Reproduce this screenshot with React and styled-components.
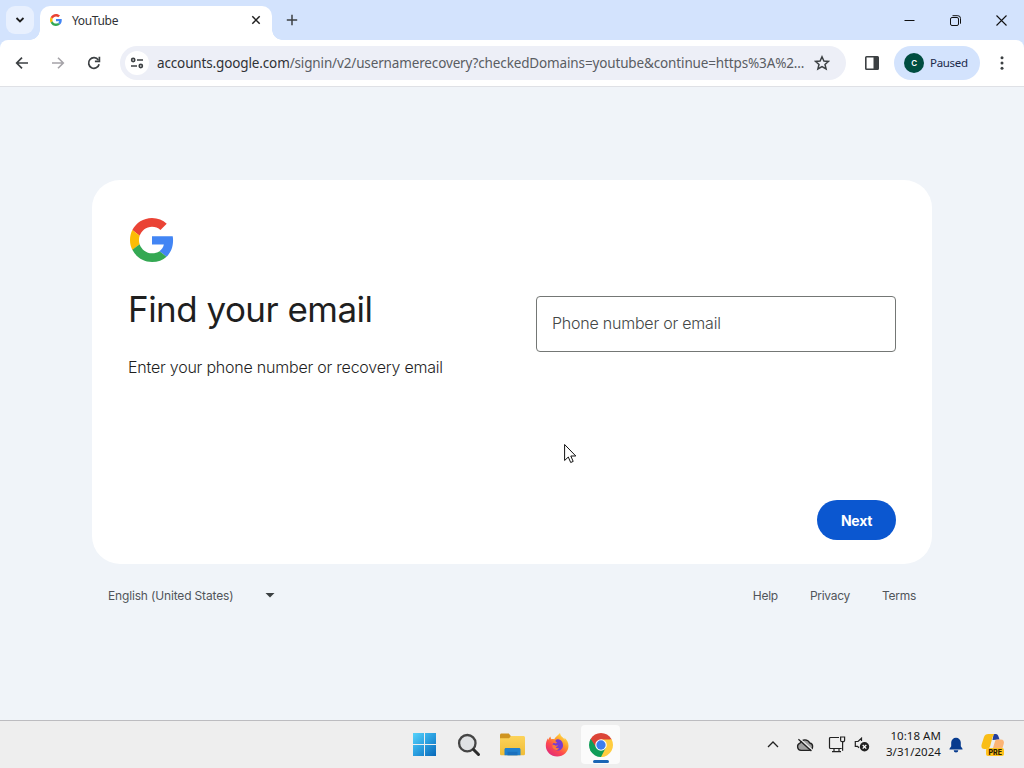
import React from "react";
import styled, { createGlobalStyle } from "styled-components";

const GlobalStyle = createGlobalStyle`
* {
  box-sizing: border-box;
}
body {
  margin: 0;
  overflow: hidden;
}
svg {
  flex-shrink: 0;
}
`

const ui = `"Noto Sans", "Open Sans", sans-serif`
const google = `Inter, Roboto, sans-serif`

const Desktop = styled.div`
position: relative;
display: flex;
flex-direction: column;
width: 1024px;
height: 768px;
overflow: hidden;
background: #d3e3fd;
font-family: ${ui};
`

/* tab strip */
const TabStrip = styled.div`
display: flex;
align-items: center;
height: 40px;
padding-left: 6px;
`
const TabSearch = styled.button`
display: flex;
align-items: center;
justify-content: center;
width: 28px;
height: 28px;
padding: 0;
border: none;
border-radius: 9px;
background: #e8f0fe;
`
const Tab = styled.div`
position: relative;
display: flex;
align-items: center;
align-self: flex-end;
width: 232px;
height: 34px;
margin-left: 6px;
padding: 0 10px 6px;
border-radius: 10px 10px 0 0;
background: #fff;

&::before,
&::after {
  content: "";
  position: absolute;
  bottom: 0;
  width: 10px;
  height: 10px;
}
&::before {
  left: -10px;
  background: radial-gradient(circle at 0 0, transparent 9.5px, #fff 10px);
}
&::after {
  right: -10px;
  background: radial-gradient(circle at 100% 0, transparent 9.5px, #fff 10px);
}
`
const TabTitle = styled.span`
flex: 1;
padding-top: 2px;
margin-left: 10px;
font-size: 12px;
line-height: 16px;
letter-spacing: -0.35px;
color: #303236;
`
const NewTab = styled.div`
display: flex;
margin-left: 14px;
`
const WindowButtons = styled.div`
display: flex;
margin-left: auto;

> div {
  display: flex;
  align-items: center;
  justify-content: center;
  width: 46px;
  height: 40px;
}
`

/* toolbar */
const Toolbar = styled.div`
display: flex;
align-items: center;
height: 47px;
padding: 0 14px 1px;
border-bottom: 1px solid #dfe1e6;
border-radius: 8px 8px 0 0;
background: #fff;
`
const NavButtons = styled.div`
display: flex;
gap: 20px;
margin-right: 18px;
`
const Omnibox = styled.div`
display: flex;
align-items: center;
width: 726px;
height: 34px;
padding: 0 16px 0 5px;
border-radius: 17px;
background: #edeff7;
`
const SiteChip = styled.div`
display: flex;
align-items: center;
justify-content: center;
flex-shrink: 0;
width: 24px;
height: 24px;
border-radius: 50%;
background: #fff;
`
const Url = styled.span`
flex: 1;
min-width: 0;
margin-left: 8px;
font-size: 13.5px;
line-height: 20px;
letter-spacing: -0.14px;
white-space: nowrap;
color: #5a5d63;

> b {
  font-weight: 400;
  color: #303236;
}
`
const PanelButton = styled.div`
display: flex;
margin: 0 14px 0 18px;
`
const Profile = styled.div`
display: flex;
align-items: center;
gap: 6px;
width: 86px;
height: 34px;
padding-left: 10px;
border-radius: 17px;
background: #d3e3fd;
font-size: 11.5px;
letter-spacing: -0.3px;
color: #1b2a4a;
`
const Avatar = styled.div`
display: flex;
align-items: center;
justify-content: center;
width: 20px;
height: 20px;
border-radius: 50%;
background: #004d40;
color: #fff;
font-family: ${google};
font-size: 8px;
font-weight: 600;
line-height: 20px;
`
const Menu = styled.div`
display: flex;
margin-left: 14px;
`

/* page */
const Page = styled.main`
flex: 1;
display: flex;
flex-direction: column;
align-items: center;
padding-top: 93px;
background: #f0f4f9;
font-family: ${google};
`
const Card = styled.section`
display: flex;
flex-direction: column;
width: 840px;
height: 384px;
padding: 38px 36px 24px;
border-radius: 28px;
background: #fff;
`
const LogoBox = styled.div`
display: flex;
height: 44px;
padding-left: 2px;
`
const Columns = styled.div`
display: flex;
justify-content: space-between;
margin-top: 24px;
`
const Title = styled.h1`
margin: 1px 0 0;
font-size: 35px;
font-weight: 400;
line-height: 44px;
letter-spacing: -0.53px;
white-space: nowrap;
color: #1f1f1f;
`
const Hint = styled.p`
margin: 24px 0 0;
font-size: 16px;
font-weight: 300;
line-height: 24px;
letter-spacing: -0.22px;
white-space: nowrap;
color: #1f1f1f;
`
const Field = styled.div`
display: flex;
align-items: center;
width: 360px;
height: 56px;
margin-top: 10px;
padding: 0 15px 2px;
border: 1px solid #747775;
border-radius: 4px;
font-size: 16px;
font-weight: 300;
letter-spacing: -0.22px;
color: #444746;
`
const NextButton = styled.button`
align-self: flex-end;
width: 79px;
height: 40px;
margin-top: auto;
padding: 0;
border: none;
border-radius: 20px;
background: #0b57d0;
color: #fff;
font-family: ${google};
font-size: 14px;
font-weight: 700;
letter-spacing: -0.3px;
`
const Footer = styled.footer`
display: flex;
align-items: center;
justify-content: space-between;
width: 808px;
height: 62px;
font-size: 12px;
letter-spacing: -0.16px;
color: #50545a;
`
const Language = styled.div`
display: flex;
align-items: center;
justify-content: space-between;
width: 167px;
`
const Links = styled.div`
display: flex;
gap: 32px;
letter-spacing: -0.28px;
`

/* taskbar */
const Taskbar = styled.div`
display: flex;
align-items: center;
height: 48px;
padding-left: 405px;
border-top: 1px solid #bcbcc0;
background: #eeeeee;
`
const TaskButton = styled.div`
position: relative;
display: flex;
align-items: center;
justify-content: center;
width: 39px;
height: 39px;
margin-right: 5px;
border-radius: 4px;
background: ${(props) => (props.$active ? "#fbfbfb" : "transparent")};

&::after {
  content: "";
  display: ${(props) => (props.$active ? "block" : "none")};
  position: absolute;
  bottom: 1px;
  width: 16px;
  height: 3px;
  border-radius: 2px;
  background: #1a66b5;
}
`
const Tray = styled.div`
display: flex;
align-items: center;
margin-left: auto;
padding-right: 19px;
`
const TrayItem = styled.div`
display: flex;
margin-right: ${(props) => props.$gap}px;
`
const Clock = styled.div`
width: 58px;
padding-bottom: 2px;
margin-right: 8px;
font-size: 11.5px;
line-height: 16px;
letter-spacing: 0.05px;
text-align: right;
white-space: nowrap;
color: #1a1a1a;
`

/* the pointer floats over the page */
const Pointer = styled.svg`
position: absolute;
left: 564px;
top: 443px;
`

const GoogleLogo = ({ size }) => (
  <svg width={size} height={size} viewBox="0 0 48 48">
    <path fill="#ea4335" d="M24 9.5c3.54 0 6.71 1.22 9.21 3.6l6.85-6.85C35.9 2.38 30.47 0 24 0 14.62 0 6.51 5.38 2.56 13.22l7.98 6.19C12.43 13.72 17.74 9.5 24 9.5z" />
    <path fill="#4285f4" d="M46.98 24.55c0-1.57-.15-3.09-.38-4.55H24v9.02h12.94c-.58 2.96-2.26 5.48-4.78 7.18l7.73 6c4.51-4.18 7.09-10.36 7.09-17.65z" />
    <path fill="#fbbc05" d="M10.53 28.59c-.48-1.45-.76-2.99-.76-4.59s.27-3.14.76-4.59l-7.98-6.19C.92 16.46 0 20.12 0 24c0 3.88.92 7.54 2.56 10.78l7.97-6.19z" />
    <path fill="#34a853" d="M24 48c6.48 0 11.93-2.13 15.89-5.81l-7.73-6c-2.15 1.45-4.92 2.3-8.16 2.3-6.26 0-11.57-4.22-13.47-9.91l-7.98 6.19C6.51 42.62 14.62 48 24 48z" />
  </svg>
)

// stroked icon with its own size and line width
const Line = ({ w = 16, h = w, color = "#3c4043", width = 1.6, d, children }) => (
  <svg width={w} height={h} viewBox={`0 0 ${w} ${h}`} fill="none" stroke={color} strokeWidth={width}>
    {d && <path d={d} />}
    {children}
  </svg>
)

const WindowsIcon = () => (
  <svg width="23" height="23" viewBox="0 0 23 23">
    <defs>
      <linearGradient id="win" x1="0" y1="0" x2="23" y2="23" gradientUnits="userSpaceOnUse">
        <stop offset="0" stopColor="#57d3fb" />
        <stop offset=".5" stopColor="#2a9fe0" />
        <stop offset="1" stopColor="#0867b8" />
      </linearGradient>
    </defs>
    <path fill="url(#win)" d="M0 0h11v11H0zM12 0h11v11H12zM0 12h11v11H0zM12 12h11v11H12z" />
  </svg>
)

const SearchIcon = () => (
  <svg width="24" height="24" viewBox="0 0 24 24">
    <circle cx="10.3" cy="10.2" r="8.2" fill="#e0e2e4" stroke="#454545" strokeWidth="2.3" />
    <path d="M16.5 16.5l5 5" stroke="#2c2c2c" strokeWidth="3" strokeLinecap="round" />
  </svg>
)

const FolderIcon = () => (
  <svg width="25" height="23" viewBox="0 0 25 23">
    <defs>
      <linearGradient id="folder" x1="0" y1="3" x2="0" y2="22" gradientUnits="userSpaceOnUse">
        <stop offset="0" stopColor="#fcd35a" />
        <stop offset="1" stopColor="#f0bd38" />
      </linearGradient>
    </defs>
    <path fill="#cf9420" d="M1.5.5h7.3l2 2.600V8H0V2C0 1.200.6.5 1.500.5z" />
    <path fill="url(#folder)" d="M0 5.300h9l2.200-2.200h12.200c.9 0 1.600.7 1.600 1.600v16c0 .9-.7 1.600-1.600 1.600H1.600c-.9 0-1.600-.7-1.600-1.600z" />
    <path fill="#2180cd" d="M6 15h13c.9 0 1.500.6 1.500 1.500v5.800h-16v-5.800c0-.9.6-1.500 1.500-1.500z" />
    <path fill="#1a70bd" d="M7.500 18.800h10v3.500h-10z" />
  </svg>
)

const FirefoxIcon = () => (
  <svg width="24" height="24" viewBox="0 0 24 24">
    <defs>
      <linearGradient id="ff" x1="20" y1="2" x2="5" y2="22" gradientUnits="userSpaceOnUse">
        <stop offset="0" stopColor="#ffe44a" />
        <stop offset=".35" stopColor="#ff9a2a" />
        <stop offset=".65" stopColor="#ff4a4e" />
        <stop offset="1" stopColor="#e02a79" />
      </linearGradient>
    </defs>
    <path fill="url(#ff)" d="M15 0c.3 2 1 3 2.800 4.500 1 .8 1.600 1.500 2 2.300-.1-1-.3-1.700-.7-2.400C22 6.300 23.500 9.500 23.500 12.800 23.500 19 18.400 23.500 12.200 23.500S.8 19 .8 12.800c0-3 .9-5.600 2.200-7.500 0 .7.1 1.300.3 1.800.4-1.700 1.100-2.700 2.200-3.600 0 1.200.3 2 .9 2.700.9-.3 2-.2 2.800.1C10.500 3.500 13.300 2.300 15 0z" />
    <path fill="#7a3bd0" d="M12.300 6.300c3.700 0 5.700 2.700 5.700 5.900s-2.300 5.300-5.300 5.300c-3.100 0-5.200-2-5.200-4.700 0-1.300.4-2.100 1-2.800.9-.1 1.600.1 2.200.6.8-.2 1.300-.5 1.700-1-.9-.2-1.700-.8-2-1.700.4-.9 1-1.500 1.900-1.600z" />
    <path fill="#ff7a35" d="M7.300 11.800c1.300-.4 2.300 0 3 .8.900.1 1.700-.1 2.600-.6-.2 1.300-1 1.900-2.200 2.100.6 1.200 2.100 1.500 3.600.8-.9 1.900-3.300 2.600-5.100 1.600-1.600-.9-2.400-2.900-1.900-4.700z" />
  </svg>
)

const ChromeIcon = () => (
  <svg width="24" height="24" viewBox="0 0 48 48">
    <path fill="#db4437" d="M24 24L3.220 12A24 24 0 0 1 44.780 12z" />
    <path fill="#ffcd40" d="M24 24L44.780 12A24 24 0 0 1 24 48z" />
    <path fill="#0f9d58" d="M24 24L24 48A24 24 0 0 1 3.220 12z" />
    <path fill="#db4437" d="M24 13h20.800L44.780 12 24 8 3.220 12 14.470 29.500z" />
    <path fill="#ffcd40" d="M33.530 29.500L24 48h3L44.800 13H24z" />
    <path fill="#0f9d58" d="M14.470 29.500L3.220 12v24L24 48l9.530-18.500z" />
    <circle cx="24" cy="24" r="11.500" fill="#fff" />
    <circle cx="24" cy="24" r="9.300" fill="#3b7ded" />
  </svg>
)

const CopilotIcon = () => (
  <svg width="24" height="24" viewBox="0 0 24 24">
    <path fill="#f9bd16" d="M7.500 1h6.300c-1.700 1-2.300 3-2.900 5.500L9.200 13c-.6 2-1.700 3-3.700 3H3.300C.8 16-.1 13.800.7 11.200L3 4c.7-2 2-3 4.500-3z" />
    <path fill="#233f9c" d="M13.300 1h1.600c1.400 0 2 .9 2.600 2.600l1 3-7 .4c.5-3 .9-5 1.800-6z" />
    <path fill="#fcb475" d="M16.500 6.500h3.200c2.800 0 3.800 2 3 4.600l-1.200 4H12l1.800-6.200c.5-1.700 1.200-2.400 2.700-2.400z" />
    <rect x="5" y="15" width="18" height="8" rx="2" fill="#ffc21c" />
    <text x="14.200" y="21.600" textAnchor="middle" fontFamily="Inter, sans-serif" fontSize="7" fontWeight="800" fill="#2d1e00">PRE</text>
  </svg>
)

function Browser() {
  return (
    <>
      <TabStrip>
        <TabSearch>
          <Line w={10} width={1.8} color="#1f1f1f" d="M1.500 3l3.500 3.500L8.500 3" />
        </TabSearch>
        <Tab>
          <GoogleLogo size={12} />
          <TabTitle>YouTube</TabTitle>
          <Line w={12} width={1.5} color="#1f1f1f" d="M2.300 2.300l7.400 7.400M9.700 2.300L2.300 9.700" />
        </Tab>
        <NewTab>
          <Line w={12} width={1.5} d="M6 .8v10.400M.8 6h10.400" />
        </NewTab>
        <WindowButtons>
          <div><Line w={11} width={1} color="#111" d="M.5 5.500h10" /></div>
          <div>
            <Line w={11} width={1} color="#111">
              <rect x=".5" y="2.500" width="8" height="8" rx="1.500" />
              <path d="M2.500.7h5.300a2.700 2.700 0 0 1 2.700 2.700v5.300" />
            </Line>
          </div>
          <div><Line w={11} width={1.1} color="#111" d="M.5.5l10 10M10.500.5l-10 10" /></div>
        </WindowButtons>
      </TabStrip>
      <Toolbar>
        <NavButtons>
          <Line width={1.7} d="M14 8H3M8 2.700L2.700 8 8 13.300" />
          <Line width={1.6} color="#a5a3a8" d="M2 8h11M8 2.700L13.300 8 8 13.300" />
          <Line width={1.7}>
            <path d="M13.100 9.200A5.300 5.300 0 1 1 12.300 5" />
            <path d="M13.400 1.800v4.600H8.900" />
          </Line>
        </NavButtons>
        <Omnibox>
          <SiteChip>
            <Line w={14} width={1.6}>
              <circle cx="3.200" cy="4" r="1.600" />
              <path d="M7 4h6M1 10h6" />
              <circle cx="10.800" cy="10" r="1.600" />
            </Line>
          </SiteChip>
          <Url>
            <b>accounts.google.com</b>/signin/v2/usernamerecovery?checkedDomains=youtube&amp;continue=https%3A%2...
          </Url>
          <Line w={16} width={1.5} d="M8 1.800l1.900 4.200 4.600.4-3.500 3 1.100 4.500L8 11.500l-4.100 2.400L5 9.400l-3.500-3 4.600-.4z" />
        </Omnibox>
        <PanelButton>
          <svg width="16" height="16" viewBox="0 0 16 16">
            <rect x="1.800" y="1.800" width="12.400" height="12.400" rx=".8" fill="none" stroke="#3c4043" strokeWidth="1.600" />
            <path fill="#3c4043" d="M9.500 1.500h4.700v13H9.500z" />
          </svg>
        </PanelButton>
        <Profile>
          <Avatar>C</Avatar>
          Paused
        </Profile>
        <Menu>
          <svg width="16" height="16" viewBox="0 0 16 16" fill="#3c4043">
            <circle cx="8" cy="2.800" r="1.500" />
            <circle cx="8" cy="8" r="1.500" />
            <circle cx="8" cy="13.200" r="1.500" />
          </svg>
        </Menu>
      </Toolbar>
    </>
  )
}

function SignIn() {
  return (
    <Page>
      <Card>
        <LogoBox><GoogleLogo size={44} /></LogoBox>
        <Columns>
          <div>
            <Title>Find your email</Title>
            <Hint>Enter your phone number or recovery email</Hint>
          </div>
          <Field>Phone number or email</Field>
        </Columns>
        <NextButton>Next</NextButton>
      </Card>
      <Footer>
        <Language>
          English (United States)
          <svg width="10" height="5" viewBox="0 0 10 5"><path fill="#3c4043" d="M.5 0h9L5 4.600z" /></svg>
        </Language>
        <Links>
          <span>Help</span>
          <span>Privacy</span>
          <span>Terms</span>
        </Links>
      </Footer>
    </Page>
  )
}

function Bar() {
  return (
    <Taskbar>
      <TaskButton><WindowsIcon /></TaskButton>
      <TaskButton><SearchIcon /></TaskButton>
      <TaskButton><FolderIcon /></TaskButton>
      <TaskButton><FirefoxIcon /></TaskButton>
      <TaskButton $active><ChromeIcon /></TaskButton>
      <Tray>
        <TrayItem $gap={17}>
          <Line w={12} width={1.3} color="#222" d="M1 8l5-5 5 5" />
        </TrayItem>
        <TrayItem $gap={14}>
          <Line w={18} h={14} width={1.3} color="#222">
            <path fill="#a0a0a0" d="M5 12.300a3.700 3.700 0 0 1-.9-7.200A5.200 5.200 0 0 1 13.700 5a3.700 3.700 0 0 1-.4 7.300z" />
            <path stroke="#eee" d="M3.400.3l13 11.800" />
            <path d="M2.400 1.200l13 11.800" />
          </Line>
        </TrayItem>
        <TrayItem $gap={8}>
          <Line w={18} h={17} width={1.2} color="#222">
            <path d="M11 1.500H2.500a1 1 0 0 0-1 1v9a1 1 0 0 0 1 1h11.200M6 12.500v3M11 12.500v3M4 15.700h9" />
            <path d="M12.600 1h4v3.200a1.500 1.500 0 0 1-1.500 1.500h-1a1.500 1.500 0 0 1-1.500-1.500zM14.600 5.700v9" />
          </Line>
        </TrayItem>
        <TrayItem $gap={13}>
          <svg width="16" height="15" viewBox="0 0 16 15">
            <path fill="none" stroke="#222" strokeWidth="1.200" d="M7.500 4V1.200L4 4.500H1.300v4.800h2.200l1.500 1.400" />
            <circle cx="10.500" cy="9.800" r="4.700" fill="#222" />
            <path stroke="#fff" strokeWidth="1.300" d="M8.700 8l3.600 3.600M12.300 8l-3.600 3.600" />
          </svg>
        </TrayItem>
        <Clock>10:18 AM<br />3/31/2024</Clock>
        <TrayItem $gap={18}>
          <svg width="14" height="16" viewBox="0 0 14 16" fill="#073b8e">
            <path d="M7 .8a4.700 4.700 0 0 1 4.800 4.700v3.700l1.700 2.600v.8H.5v-.8l1.700-2.600V5.500A4.700 4.700 0 0 1 7 .8zM4.700 13.300h4.600a2.300 2.300 0 0 1-4.600 0z" />
          </svg>
        </TrayItem>
        <CopilotIcon />
      </Tray>
    </Taskbar>
  )
}

function App() {
  return (
    <Desktop>
      <GlobalStyle />
      <Browser />
      <SignIn />
      <Bar />
      <Pointer width="13" height="21" viewBox="0 0 13 21">
        <path fill="#fff" stroke="#111" strokeWidth="1" d="M.6 1.500v16l3.700-3.500 2.400 5.500 2.500-1.100-2.400-5.400h5z" />
      </Pointer>
    </Desktop>
  )
}

export default App;
